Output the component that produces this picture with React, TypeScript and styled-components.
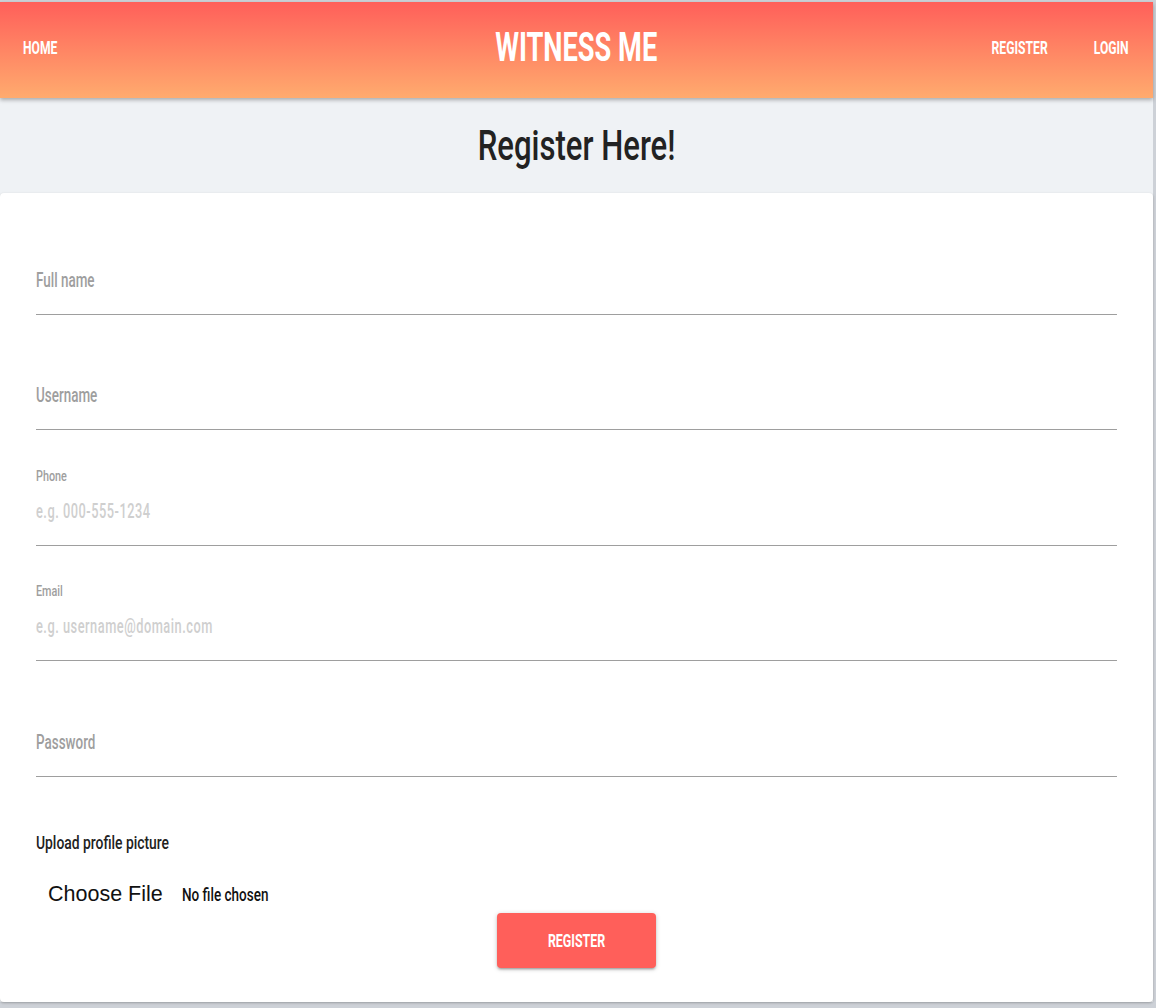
import React from 'react';
import styled, { createGlobalStyle } from 'styled-components';

// no condensed face is installed, so Roboto is squeezed sideways to read like the original narrow font
const FONT = `"Roboto", "Liberation Sans", sans-serif`;
const SQUEEZE = 0.64;

const GlobalStyle = createGlobalStyle`
  html, body {
    margin: 0;
    padding: 0;
    background: #cdd1d7;
  }
  * {
    box-sizing: border-box;
  }
`;

const Frame = styled.div`
  padding: 2px 3px 5px 0;
  font-family: ${FONT};
`;

const Page = styled.div`
  background: #eff2f5;
`;

interface NarrowProps {
  $origin?: 'left' | 'center' | 'right';
  $scale?: number;
}
const Narrow = styled.span<NarrowProps>`
  display: inline-block;
  white-space: nowrap;
  transform: scaleX(${({ $scale }) => $scale || SQUEEZE});
  transform-origin: ${({ $origin }) => $origin || 'left'} center;
`;

const Header = styled.nav`
  height: 96px;
  display: grid;
  grid-template-columns: 1fr auto 1fr;
  align-items: center;
  padding: 0 24px 4px 23px;
  background: linear-gradient(to bottom, #ff5f5a 0%, #ffab6e 100%);
  box-shadow: 0 2px 4px rgba(0, 0, 0, 0.3);
  position: relative;
  z-index: 1;
`;

const NavLink = styled.a`
  color: #fff;
  font-weight: 700;
  font-size: 19px;
  line-height: 20px;
  text-decoration: none;
  text-transform: uppercase;
`;

const Brand = styled.a`
  color: #fff;
  font-weight: 700;
  font-size: 40px;
  line-height: 44px;
  text-decoration: none;
  text-transform: uppercase;
`;

const NavRight = styled.div`
  display: flex;
  justify-content: flex-end;
  gap: 27px;
`;

const TitleBar = styled.div`
  height: 95px;
  display: flex;
  align-items: center;
  justify-content: center;
`;

const Title = styled.h1`
  margin: 0;
  font-size: 42px;
  line-height: 48px;
  font-weight: 500;
  color: #222;
`;

const Card = styled.form`
  background: #fff;
  border-radius: 4px;
  box-shadow: 0 1px 3px rgba(0, 0, 0, 0.16), 0 1px 2px rgba(0, 0, 0, 0.1);
  padding: 6px 36px 34px;
  display: flex;
  flex-direction: column;
  overflow: hidden;
`;

const Field = styled.div`
  height: 115.5px;
  display: flex;
  flex-direction: column;
  justify-content: flex-end;
`;

const SmallLabel = styled.label`
  font-size: 15px;
  font-weight: 500;
  color: #9e9e9e;
  line-height: 16px;
  margin-bottom: 13px;
`;

const Input = styled.input<{ $hint?: boolean }>`
  height: 49px;
  width: calc(100% / ${SQUEEZE});
  transform: scaleX(${SQUEEZE});
  transform-origin: 0 0;
  border: none;
  border-bottom: 1px solid #9e9e9e;
  padding: 0 0 20px;
  line-height: 28px;
  font-family: ${FONT};
  font-size: ${({ $hint }) => ($hint ? '20px' : '21px')};
  letter-spacing: ${({ $hint }) => ($hint ? '0.8px' : '0')};
  color: #333;
  outline: none;
  background: transparent;

  &::placeholder {
    color: ${({ $hint }) => ($hint ? '#cfcfcf' : '#9e9e9e')};
    font-weight: 500;
    opacity: 1;
  }
`;

const UploadLabel = styled.div`
  margin-top: 56px;
  font-size: 19px;
  font-weight: 500;
  line-height: 20px;
  color: #222;
`;

const FileRow = styled.label`
  display: flex;
  align-items: center;
  gap: 19px;
  margin-top: 29px;
  padding-left: 12px;

  input {
    display: none;
  }
`;

const FileButton = styled.span`
  font-family: 'Liberation Sans', Arial, sans-serif;
  font-size: 21.5px;
  color: #111;
`;

const FileStatus = styled.span`
  font-size: 18px;
  font-weight: 500;
  color: #111;
`;

const SubmitButton = styled.button`
  align-self: center;
  margin-top: 6px;
  width: 159px;
  height: 55px;
  border: none;
  border-radius: 4px;
  background: #ff5f5a;
  color: #fff;
  font-family: ${FONT};
  font-size: 18px;
  font-weight: 700;
  text-transform: uppercase;
  box-shadow: 0 2px 2px 0 rgba(0, 0, 0, 0.14), 0 3px 1px -2px rgba(0, 0, 0, 0.12),
    0 1px 5px 0 rgba(0, 0, 0, 0.2);
  cursor: pointer;
`;

const fields = [
  { name: 'fullname', type: 'text', label: 'Full name' },
  { name: 'username', type: 'text', label: 'Username' },
  { name: 'phone', type: 'tel', label: 'Phone', hint: 'e.g. 000-555-1234' },
  { name: 'email', type: 'email', label: 'Email', hint: 'e.g. username@domain.com' },
  { name: 'password', type: 'password', label: 'Password' },
];

const App: React.FC = () => {
  return (
    <Frame>
      <GlobalStyle />
      <Page>
        <Header>
          <div>
            <NavLink href='#'>
              <Narrow>Home</Narrow>
            </NavLink>
          </div>
          <Brand href='#'>
            <Narrow $origin='center' $scale={0.68}>
              Witness Me
            </Narrow>
          </Brand>
          <NavRight>
            <NavLink href='#'>
              <Narrow $origin='right'>Register</Narrow>
            </NavLink>
            <NavLink href='#'>
              <Narrow $origin='right'>Login</Narrow>
            </NavLink>
          </NavRight>
        </Header>
        <TitleBar>
          <Title>
            <Narrow $origin='center' $scale={0.74}>
              Register Here!
            </Narrow>
          </Title>
        </TitleBar>
        <Card onSubmit={(e) => e.preventDefault()}>
          {fields.map((f) => (
            <Field key={f.name}>
              {f.hint && (
                <SmallLabel htmlFor={f.name}>
                  <Narrow $scale={0.72}>{f.label}</Narrow>
                </SmallLabel>
              )}
              <Input
                id={f.name}
                name={f.name}
                type={f.type}
                placeholder={f.hint || f.label}
                $hint={!!f.hint}
              />
            </Field>
          ))}
          <UploadLabel>
            <Narrow $scale={0.73}>Upload profile picture</Narrow>
          </UploadLabel>
          <FileRow>
            <input type='file' accept='image/*' />
            <FileButton>Choose File</FileButton>
            <FileStatus>
              <Narrow $scale={0.75}>No file chosen</Narrow>
            </FileStatus>
          </FileRow>
          <SubmitButton type='submit'>
            <Narrow $origin='center' $scale={0.69}>
              Register
            </Narrow>
          </SubmitButton>
        </Card>
      </Page>
    </Frame>
  );
};

export default App;
